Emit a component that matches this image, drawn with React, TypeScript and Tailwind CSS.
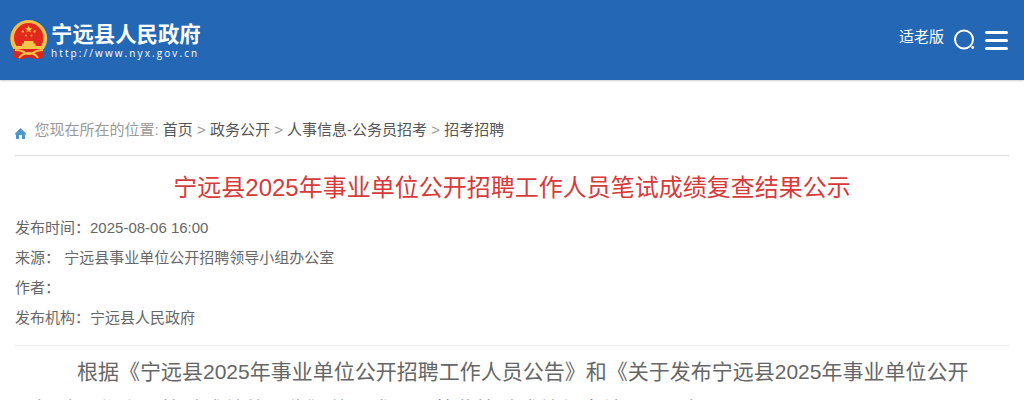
const trail = ["首页", "政务公开", "人事信息-公务员招考", "招考招聘"];

const details = [
  { label: "发布时间：", value: "2025-08-06 16:00" },
  { label: "来源：", value: "\u00a0宁远县事业单位公开招聘领导小组办公室" },
  { label: "作者：", value: "" },
  { label: "发布机构：", value: "宁远县人民政府" },
];

const Emblem = () => (
  <svg className="h-10 w-[38px]" viewBox="0 0 38 40">
    <path d="M5 27 L4 37 L11 39 L19 37 L26 39 L33 37 L33 27Z" fill="#d9251c" />
    <circle cx="18.700" cy="18.500" r="18.500" fill="#f3bf4b" />
    <circle cx="18.700" cy="17.800" r="14.700" fill="#e3291d" />
    <path d="M18.700 5.500l1 2.700h2.800l-2.300 1.700.9 2.700-2.400-1.600-2.300 1.600.8-2.700-2.200-1.700h2.800z" fill="#f8cf4e" />
    <g fill="#efa33b">
      <circle cx="12.800" cy="11.500" r="1.200" />
      <circle cx="24.600" cy="11.500" r="1.200" />
      <circle cx="16" cy="15.500" r="1.100" />
      <circle cx="21.500" cy="15.500" r="1.100" />
    </g>
    <path d="M14 21h9.500v2.500h2v2.500H33l-1.500 3H6l-1.500-3H12v-2.500h2z" fill="#f6c64b" />
    <path d="M4 29h29.500l-1 9-6 1-7.500-2-8 2-6-1z" fill="#d9251c" />
    <path d="M5 30q7 0 10 3 4 2 8 0 4-3 10-3M9 38q4-5 10-5t9 5" fill="none" stroke="#f4bd43" strokeWidth="2" />
  </svg>
);

const Header = () => (
  <header className="flex h-20 items-start justify-between bg-[#2467b5] pl-[10px] pr-4 text-white shadow-[0_1px_2px_rgba(0,0,0,0.2)]">
    <div className="flex pt-5">
      <Emblem />
      <div className="ml-[3px] pt-[3px] whitespace-nowrap">
        <div className="text-[21.400px] leading-6 font-bold">宁远县人民政府</div>
        <div className="font-['Open_Sans'] text-[10px] leading-[13px] tracking-[2.100px]">http://www.nyx.gov.cn</div>
      </div>
    </div>
    <div className="flex">
      <span className="pt-[25px] text-[15px] leading-6">适老版</span>
      <svg className="mt-[29px] ml-[9px] h-[22px] w-[22px]" viewBox="0 0 22 22">
        <circle cx="11" cy="10.500" r="9" fill="none" stroke="currentColor" strokeWidth="2" />
        <circle cx="19.700" cy="18.500" r="1.400" fill="currentColor" />
      </svg>
      <div className="mt-[31px] ml-[10px] flex w-[23px] flex-col gap-[5px]">
        <span className="h-[3px] rounded-full bg-white"></span>
        <span className="h-[3px] rounded-full bg-white"></span>
        <span className="h-[3px] rounded-full bg-white"></span>
      </div>
    </div>
  </header>
);

const Breadcrumb = () => (
  <nav className="flex h-[76px] items-start border-b border-[#dddddd] pt-[35px] text-[15px] leading-[30px] text-[#999999]">
    <svg className="mt-[13px] mr-[8.500px] h-[11px] w-[11px]" viewBox="0 0 11 11">
      <path d="M5.500 0L11 5.500V6.500H10V11H7V7H4V11H1V6.500H0V5.500Z" fill="#4c98cb" />
    </svg>
    <span className="whitespace-pre">您现在所在的位置: </span>
    {trail.map((item, index) => (
      <span key={item} className="whitespace-pre">
        {index > 0 && " > "}
        <a href="#" className="text-[#555555]">{item}</a>
      </span>
    ))}
  </nav>
);

const App = () => {
  return (
    <div className="h-[400px] overflow-hidden bg-white font-['Liberation_Sans','Noto_Sans_CJK_SC',sans-serif]">
      <Header />
      <main className="mx-[15px]">
        <Breadcrumb />
        <h1 className="pt-3 text-center text-[24px] leading-10 text-[#d63a3a]">
          宁远县2025年事业单位公开招聘工作人员笔试成绩复查结果公示
        </h1>
        <dl className="border-b border-[#eeeeee] pt-[5px] pb-3 text-[15px] leading-[30px] text-[#666666]">
          {details.map((detail) => (
            <div key={detail.label} className="flex">
              <dt>{detail.label}</dt>
              <dd>{detail.value}</dd>
            </div>
          ))}
        </dl>
        <article className="px-5 pt-[7px] text-[21px] leading-[38px] text-[#666666]">
          <p className="indent-[2em]">
            根据《宁远县2025年事业单位公开招聘工作人员公告》和《关于发布宁远县2025年事业单位公开招聘工作人员笔试成绩的公告》的要求，现将此笔试成绩复查结果公示如下。
          </p>
        </article>
      </main>
    </div>
  );
};

export default App;
